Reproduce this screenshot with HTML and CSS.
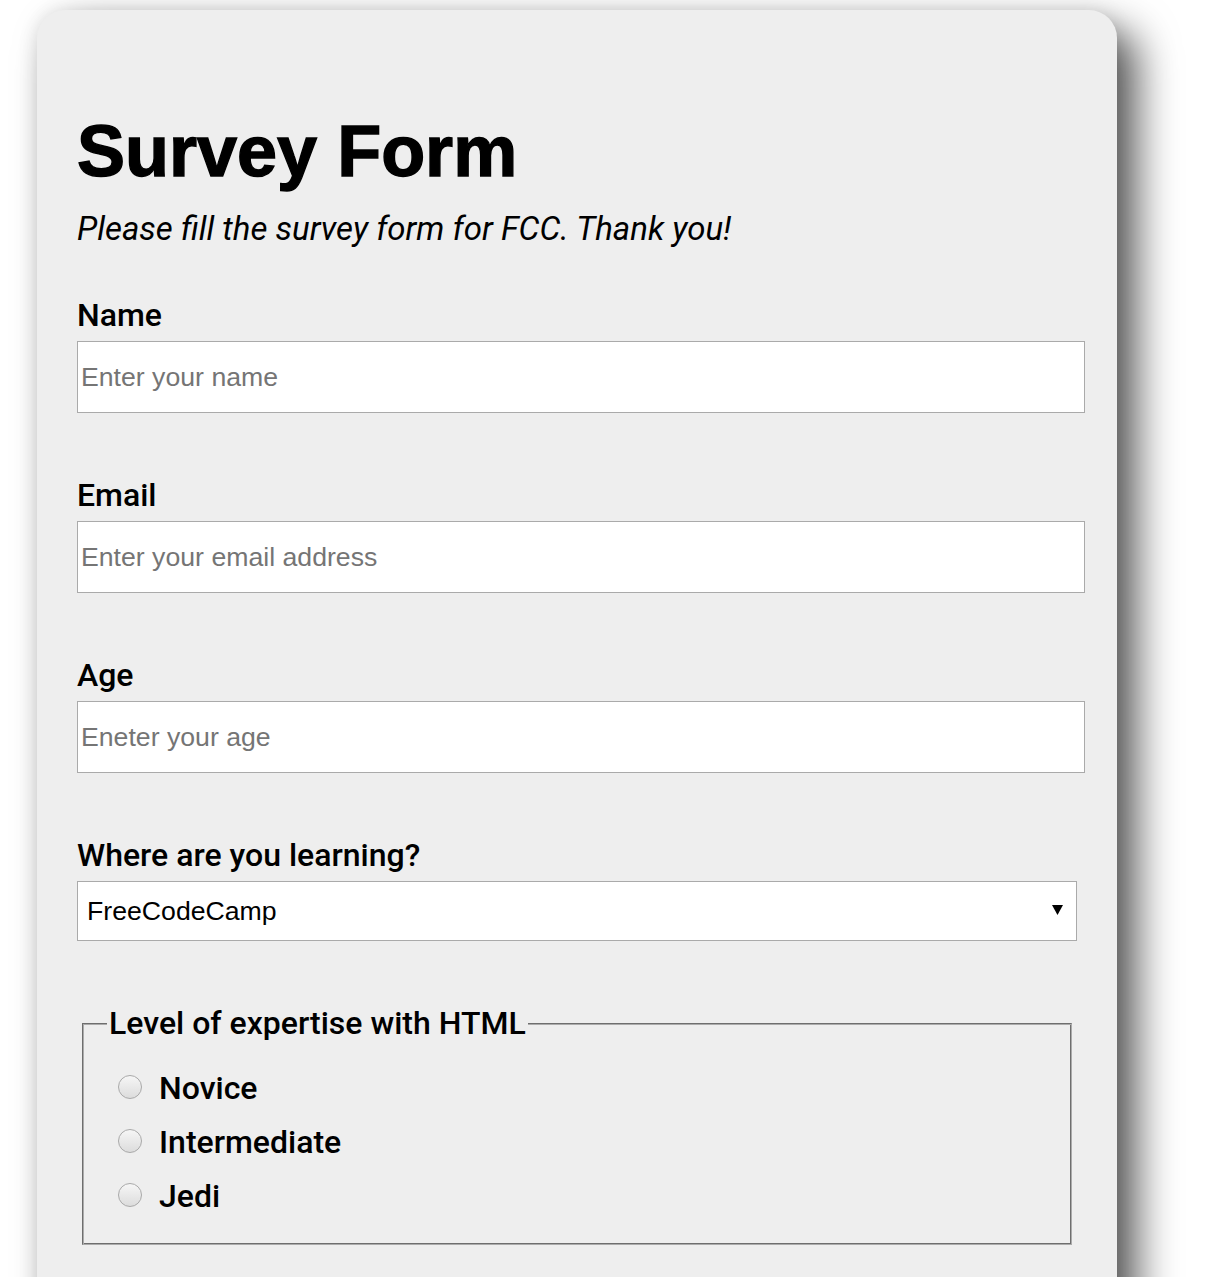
FILE: index.html
```html
<!DOCTYPE html>
<html lang="en">
<head>
<meta charset="utf-8">
<title>Survey Form</title>
<link rel="stylesheet" href="styles.css">
</head>
<body>
<main class="card">
  <h1 class="title" id="title">Survey Form</h1>
  <p class="description" id="description">Please fill the survey form for FCC. Thank you!</p>
  <form class="survey" id="survey-form">
    <div class="group">
      <label class="label" for="name" id="name-label">Name</label>
      <input class="field" id="name" type="text" placeholder="Enter your name">
    </div>
    <div class="group">
      <label class="label" for="email" id="email-label">Email</label>
      <input class="field" id="email" type="email" placeholder="Enter your email address">
    </div>
    <div class="group">
      <label class="label" for="number" id="number-label">Age</label>
      <input class="field" id="number" type="number" placeholder="Eneter your age">
    </div>
    <div class="group">
      <label class="label" for="dropdown">Where are you learning?</label>
      <div class="select-wrap">
        <select class="select" id="dropdown">
          <option>FreeCodeCamp</option>
          <option>Udemy</option>
          <option>Coursera</option>
        </select>
        <svg class="select-arrow" width="11" height="10" viewBox="0 0 11 10"><path d="M0 0 H11 L5.5 10 Z" fill="#000"/></svg>
      </div>
    </div>
    <fieldset class="levels">
      <legend class="legend">Level of expertise with HTML</legend>
      <label class="choice"><input class="radio" type="radio" name="level" value="novice"><span>Novice</span></label>
      <label class="choice"><input class="radio" type="radio" name="level" value="intermediate"><span>Intermediate</span></label>
      <label class="choice"><input class="radio" type="radio" name="level" value="jedi"><span>Jedi</span></label>
    </fieldset>
  </form>
</main>
</body>
</html>
```
FILE: styles.css
```css
html, body {
  margin: 0;
  padding: 0;
  background: #ffffff;
}

body {
  font-family: Roboto, "Liberation Sans", sans-serif;
  color: #000;
}

.card {
  box-sizing: border-box;
  width: 1080px;
  margin: 10px 0 0 37px;
  padding: 101px 32px 120px 40px;
  background: #eeeeee;
  border-radius: 28px;
  box-shadow: 20px 20px 40px rgba(0, 0, 0, 0.65), 0 0 20px rgba(0, 0, 0, 0.1);
}

.title {
  margin: 0;
  font-family: "Liberation Sans", Arial, sans-serif;
  font-weight: 700;
  font-size: 72px;
  line-height: 80px;
  -webkit-text-stroke: 1.4px #000;
}

.description {
  margin: 20px 0 0;
  font-family: Roboto, sans-serif;
  font-style: italic;
  font-size: 33px;
  line-height: 36px;
}

.survey {
  margin-top: 50px;
}

.group {
  display: flex;
  flex-direction: column;
  align-items: flex-start;
  gap: 8px;
  margin-bottom: 64px;
}

.label {
  font-family: Roboto, sans-serif;
  font-weight: 500;
  font-size: 32px;
  line-height: 36px;
}

.field {
  box-sizing: border-box;
  width: 1008px;
  height: 72px;
  margin: 0;
  padding: 0 3px;
  border: 1px solid #aaaaaa;
  background: #ffffff;
  font-family: "Liberation Sans", Arial, sans-serif;
  font-size: 26.67px;
  color: #000;
  outline: none;
  -moz-appearance: textfield;
}

.field::placeholder {
  color: #757575;
}

.field::-webkit-outer-spin-button,
.field::-webkit-inner-spin-button {
  -webkit-appearance: none;
  margin: 0;
}

.select-wrap {
  position: relative;
  width: 1000px;
}

.select {
  box-sizing: border-box;
  width: 1000px;
  height: 60px;
  margin: 0;
  padding: 0 40px 0 9px;
  border: 1px solid #aaaaaa;
  border-radius: 0;
  background: #ffffff;
  font-family: "Liberation Sans", Arial, sans-serif;
  font-size: 26.67px;
  color: #000;
  appearance: none;
  -webkit-appearance: none;
  outline: none;
}

.select-arrow {
  position: absolute;
  left: 975px;
  top: 24px;
  pointer-events: none;
}

.levels {
  box-sizing: border-box;
  width: 990px;
  min-width: 0;
  margin: 0 13px 0 5px;
  padding: 20px 24px 21px 24px;
  border-style: solid;
  border-width: 1px;
  border-color: #6e6e6e #ababab #ababab #6e6e6e;
  box-shadow: inset 1px 1px 0 #ababab, inset -1px -1px 0 #6e6e6e;
}

.legend {
  padding: 0 2px;
  background: #eeeeee;
  font-family: Roboto, sans-serif;
  font-weight: 500;
  font-size: 32px;
  line-height: 36px;
}

.choice {
  display: flex;
  align-items: center;
  height: 54px;
  padding-left: 11px;
  font-family: Roboto, sans-serif;
  font-weight: 500;
  font-size: 32px;
  line-height: 36px;
}

.radio {
  box-sizing: border-box;
  width: 24px;
  height: 24px;
  margin: -3px 17px 0 0;
  border: 1px solid #a9a9a9;
  border-radius: 50%;
  background: linear-gradient(#f6f6f6, #dcdcdc);
  appearance: none;
  -webkit-appearance: none;
  flex: none;
}
```
